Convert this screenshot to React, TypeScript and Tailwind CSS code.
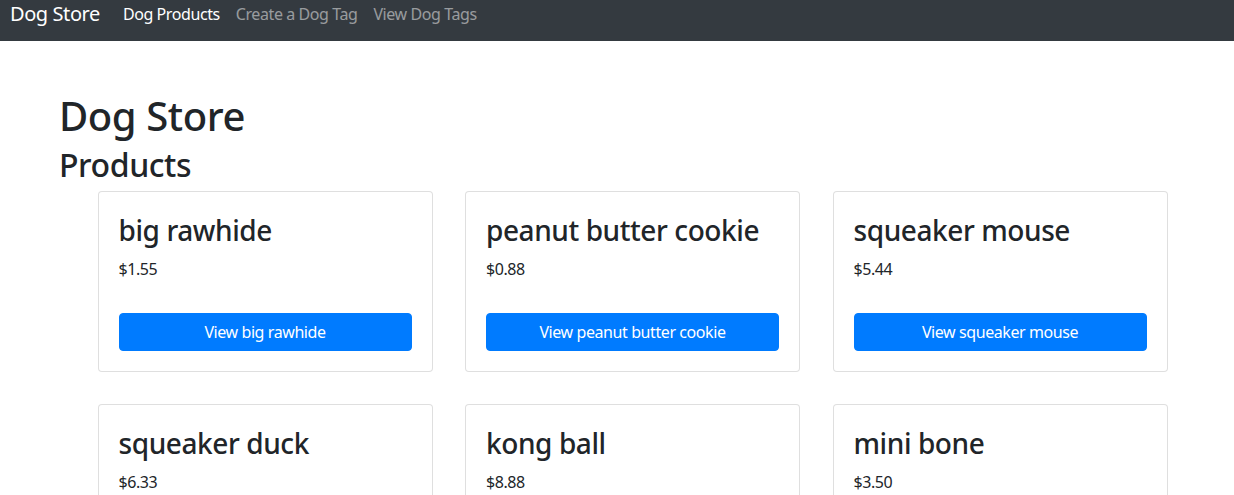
const products = [
  { name: 'big rawhide', price: '1.55' },
  { name: 'peanut butter cookie', price: '0.88' },
  { name: 'squeaker mouse', price: '5.44' },
  { name: 'squeaker duck', price: '6.33' },
  { name: 'kong ball', price: '8.88' },
  { name: 'mini bone', price: '3.50' },
];

function ProductCard({ name, price }: { name: string; price: string }) {
  return (
    <div className="rounded-[4px] border border-[rgba(0,0,0,0.125)] bg-white px-5 pt-[22px] pb-5">
      <h3 className="mb-[9px] text-[28px] leading-[33.6px] font-medium text-[#212529]">{name}</h3>
      <p className="mb-4 text-base leading-6 text-[#212529]">${price}</p>
      <button className="mt-[32px] block w-full rounded-[4px] border border-[#007bff] bg-[#007bff] px-3 py-[6px] text-base leading-6 text-white">
        View {name}
      </button>
    </div>
  );
}

export default function App() {
  return (
    <div className="min-h-screen bg-white font-['Segoe_UI','Noto_Sans',sans-serif] tracking-[-0.026em] text-[#212529]">
      <nav className="flex h-[41px] items-start bg-[#343a40] px-[10px]">
        <a className="mr-[23px] text-xl leading-7 text-white">Dog Store</a>
        <div className="flex gap-4 text-base leading-7">
          <a className="text-white">Dog Products</a>
          <a className="text-[rgba(255,255,255,0.5)]">Create a Dog Tag</a>
          <a className="text-[rgba(255,255,255,0.5)]">View Dog Tags</a>
        </div>
      </nav>
      <main className="mx-auto w-[1140px] pt-[51px] pr-[15px] pl-[12px]">
        <h1 className="mb-[6px] text-[40px] leading-[48px] font-medium">Dog Store</h1>
        <h2 className="mb-[7px] text-[32px] leading-[38.4px] font-medium">Products</h2>
        <div className="ml-[38.5px] grid grid-cols-[335px_335px_335px] gap-x-[32.5px] gap-y-8">
          {products.map((p) => (
            <ProductCard key={p.name} name={p.name} price={p.price} />
          ))}
        </div>
      </main>
    </div>
  );
}
